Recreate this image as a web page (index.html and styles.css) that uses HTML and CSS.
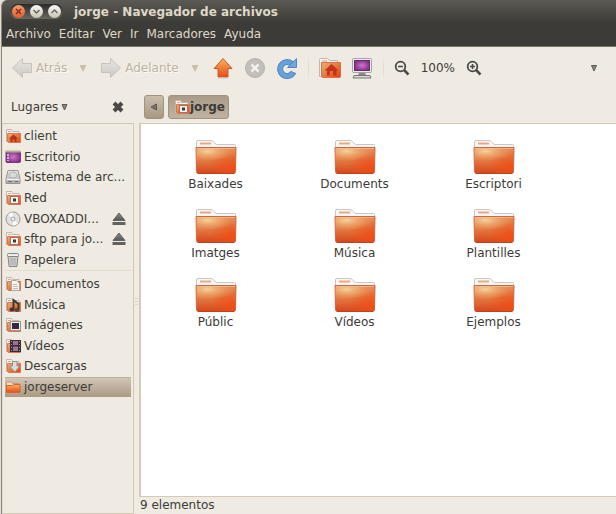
FILE: index.html
```html
<!DOCTYPE html>
<html lang="es">
<head>
    <meta charset="utf-8">
    <title>jorge - Navegador de archivos</title>
    <link rel="stylesheet" href="styles.css">
</head>
<body>
    <svg class="defs" aria-hidden="true">
        <defs>
            <linearGradient id="gOrange" x1="0" y1="0" x2="1" y2="1">
                <stop offset="0" stop-color="#f0b070"/>
                <stop offset="0.5" stop-color="#e07c40"/>
                <stop offset="0.8" stop-color="#ec541d"/>
                <stop offset="1" stop-color="#d8431a"/>
            </linearGradient>
            <radialGradient id="gShine" cx="0.28" cy="0.2" r="0.7">
                <stop offset="0" stop-color="#f8dba6" stop-opacity="0.9"/>
                <stop offset="1" stop-color="#f0a860" stop-opacity="0"/>
            </radialGradient>
            <linearGradient id="gFolder" x1="0" y1="0" x2="0" y2="1">
                <stop offset="0" stop-color="#e58a58"/>
                <stop offset="0.6" stop-color="#e0703a"/>
                <stop offset="1" stop-color="#d8441a"/>
            </linearGradient>
            <radialGradient id="gGlow" cx="0.95" cy="0.75" r="0.6">
                <stop offset="0" stop-color="#f04e16"/>
                <stop offset="1" stop-color="#f04e16" stop-opacity="0"/>
            </radialGradient>
            <linearGradient id="gUp" x1="0" y1="0" x2="0" y2="1">
                <stop offset="0" stop-color="#f4b55f"/>
                <stop offset="1" stop-color="#ea4a17"/>
            </linearGradient>
            <linearGradient id="gGray" x1="0" y1="0" x2="0" y2="1">
                <stop offset="0" stop-color="#eae7e3"/>
                <stop offset="1" stop-color="#cbc6c0"/>
            </linearGradient>
            <radialGradient id="gPurple">
                <stop offset="0" stop-color="#cf78cc"/>
                <stop offset="1" stop-color="#86338b"/>
            </radialGradient>
            <linearGradient id="gMetal" x1="0" y1="0" x2="0" y2="1">
                <stop offset="0" stop-color="#ededed"/>
                <stop offset="1" stop-color="#a9a9a9"/>
            </linearGradient>
            <linearGradient id="gEject" x1="0" y1="0" x2="0" y2="1">
                <stop offset="0" stop-color="#8f8f8d"/>
                <stop offset="1" stop-color="#555553"/>
            </linearGradient>
        </defs>
        <symbol id="folder" viewBox="0 0 42 36">
            <path d="M1.500 10V3q0-1.500 1.500-1.500h13q1.500 0 2.500 1.500l3 2.500h18q1 0 1 1V10z" fill="#f7f7f6" stroke="#c8c7c6"/>
            <path d="M5 4.500h11" stroke="#efa683" stroke-width="2"/>
            <path d="M1 8.500h40l-.5 24q0 2-2 2h-35q-2 0-2-2z" fill="url(#gFolder)"/>
            <path d="M1 8.500h40l-.5 24q0 2-2 2h-35q-2 0-2-2z" fill="url(#gGlow)" stroke="#cd6842"/>
            <path d="M1.500 9h39v9Q22 20 1.500 25z" fill="url(#gShine)"/>
            <path d="M2 9.500h38" stroke="#f4c095" stroke-opacity="0.7"/>
            <path d="M3 34.500h36" stroke="#b84620"/>
        </symbol>
        <symbol id="smallFolder" viewBox="0 0 16 16">
            <path d="M1.500 13.500v-12h5l1 2h6.500v10z" fill="#f8f6f4" stroke="#bab7b3"/>
            <path d="M3 3.500h3" stroke="#f0a07a"/>
            <path d="M2.500 5.500h13v9h-12l-1-1z" fill="url(#gOrange)" stroke="#dd7650"/>
        </symbol>
        <symbol id="server" viewBox="0 0 16 16">
            <use href="#smallFolder"/>
            <rect x="5.500" y="6.500" width="8" height="7" fill="#f4f3f1" stroke="#a8735f"/>
            <path d="M8 8.500h3v3H8z" fill="#3a3936"/>
        </symbol>
    </svg>

    <div class="window">
        <header class="titlebar">
            <div class="controls">
                <button class="control close" aria-label="Cerrar"><svg viewBox="0 0 13 13"><path d="M4 4l5 5M9 4l-5 5" stroke="#7c351b" stroke-width="1.500"/></svg></button>
                <button class="control" aria-label="Minimizar"><svg viewBox="0 0 13 13"><path d="M3.500 5l3 3 3-3" fill="none" stroke="#696760" stroke-width="1.500"/></svg></button>
                <button class="control" aria-label="Maximizar"><svg viewBox="0 0 13 13"><path d="M3.500 8l3-3 3 3" fill="none" stroke="#696760" stroke-width="1.500"/></svg></button>
            </div>
            <h1>jorge - Navegador de archivos</h1>
        </header>

        <nav class="menubar">
            <button>Archivo</button>
            <button>Editar</button>
            <button>Ver</button>
            <button>Ir</button>
            <button>Marcadores</button>
            <button>Ayuda</button>
        </nav>

        <div class="toolbar">
            <button class="tool history" disabled>
                <svg width="22" height="22" viewBox="0 0 22 22"><path d="M1.500 11L11.500 1.500v5h9v9h-9v5z" fill="url(#gGray)" stroke="#c8c3bd"/></svg>
                Atrás
            </button>
            <button class="tool drop" disabled aria-label="Historial atrás"><svg width="8" height="8" viewBox="0 0 8 8"><path d="M0.500 1h7l-3.500 7z" fill="#c9bea8"/></svg></button>
            <button class="tool history" disabled>
                <svg width="22" height="22" viewBox="0 0 22 22"><path d="M20.500 11L10.500 1.500v5h-9v9h9v5z" fill="url(#gGray)" stroke="#c8c3bd"/></svg>
                Adelante
            </button>
            <button class="tool drop" disabled aria-label="Historial adelante"><svg width="8" height="8" viewBox="0 0 8 8"><path d="M0.500 1h7l-3.500 7z" fill="#c9bea8"/></svg></button>
            <button class="tool" aria-label="Subir">
                <svg width="22" height="22" viewBox="0 0 22 22"><path d="M11 1.500L20 11.500h-4v8.500h-10v-8.500h-4z" fill="url(#gUp)" stroke="#ca5a2c"/><path d="M6 21h10" stroke="#c9c3ba"/></svg>
            </button>
            <button class="tool" aria-label="Detener" disabled>
                <svg width="22" height="22" viewBox="0 0 22 22"><circle cx="11" cy="11" r="9.500" fill="#c3beb9" stroke="#b5b0aa"/><path d="M7.500 7.500l7 7M14.500 7.500l-7 7" stroke="#f3f1ee" stroke-width="2.500"/></svg>
            </button>
            <button class="tool" aria-label="Recargar">
                <svg width="22" height="22" viewBox="0 0 22 22"><path d="M17.500 15A7 7 0 1 1 15.500 6.500" fill="none" stroke="#5088c8" stroke-width="6"/><path d="M11.500 10.500h9V1.500z" fill="#75a6da" stroke="#5088c8"/><path d="M17 16A7 7 0 1 1 15 6" fill="none" stroke="#6b9fd8" stroke-width="4"/></svg>
            </button>
            <span class="sep"></span>
            <button class="tool" aria-label="Carpeta personal">
                <svg width="22" height="22" viewBox="0 0 22 22"><path d="M0.500 19.500v-17q0-1 1-1h7l2 2h8v16z" fill="#f5f3f1" stroke="#bcb8b4"/><path d="M3 4h5" stroke="#ee9b75"/><path d="M2.500 5.500h19v14q0 1-1 1h-17l-1-1z" fill="url(#gOrange)" stroke="#de6f45"/><path d="M5.500 13.500L12.500 7l7 6.500h-2v5h-3.500V14h-3v4.500H8v-5z" fill="#c3331d"/></svg>
            </button>
            <button class="tool" aria-label="Equipo">
                <svg width="22" height="22" viewBox="0 0 22 22"><rect x="1.500" y="1.500" width="19" height="14" rx="1" fill="#ebeaea" stroke="#a5a3a3"/><rect x="3.500" y="3.500" width="15" height="10" fill="url(#gPurple)" stroke="#6b2a70"/><path d="M8 16h6l1 2H7z" fill="#888"/><path d="M3 18.500h16l1 2.500H2z" fill="#d9d9d9" stroke="#777"/></svg>
            </button>
            <span class="sep"></span>
            <button class="tool" aria-label="Reducir">
                <svg width="16" height="16" viewBox="0 0 16 16"><circle cx="6.500" cy="6.500" r="4.800" fill="none" stroke="#4b4946" stroke-width="1.800"/><path d="M4 6.500h5" stroke="#4b4946" stroke-width="1.500"/><path d="M10 10l4.500 4.500" stroke="#4b4946" stroke-width="2.500"/></svg>
            </button>
            <span class="zoom-level">100%</span>
            <button class="tool" aria-label="Ampliar">
                <svg width="16" height="16" viewBox="0 0 16 16"><circle cx="6.500" cy="6.500" r="4.800" fill="none" stroke="#4b4946" stroke-width="1.800"/><path d="M4 6.500h5M6.500 4v5" stroke="#4b4946" stroke-width="1.500"/><path d="M10 10l4.500 4.500" stroke="#4b4946" stroke-width="2.500"/></svg>
            </button>
            <button class="tool more" aria-label="Más opciones"><svg width="8" height="8" viewBox="0 0 8 8"><path d="M1.500 1.500h5L4 7z" fill="#8b8882" stroke="#5c5a56"/></svg></button>
        </div>

        <div class="content">
            <aside class="side">
                <div class="side-head">
                    <button class="places">Lugares <svg width="7" height="8" viewBox="0 0 7 8"><path d="M1 1.500h5L3.500 7z" fill="#8b8882" stroke="#5c5a56"/></svg></button>
                    <button class="side-close" aria-label="Cerrar panel"><svg width="12" height="12" viewBox="0 0 12 12"><path d="M2 2l8 8M10 2l-8 8" stroke="#4c4a47" stroke-width="4"/></svg></button>
                </div>
                <div class="places-list">
                    <ul>
                        <li><a href="#"><svg class="icon" viewBox="0 0 16 16"><use href="#smallFolder"/><path d="M4 10.500L8.500 6.500l4.500 4h-1.500V14h-2v-2.500h-2V14h-2v-3.500z" fill="#b92f18"/></svg>client</a></li>
                        <li><a href="#"><svg class="icon" viewBox="0 0 16 16"><rect x="1" y="2.500" width="14.500" height="11" rx="1" fill="url(#gPurple)" stroke="#76377b"/><path d="M0.500 2.500h15" stroke="#b5ad91" stroke-width="2"/><path d="M3 5v7" stroke="#e9d7ea" stroke-width="1.500" stroke-dasharray="2 1"/></svg>Escritorio</a></li>
                        <li><a href="#"><svg class="icon" viewBox="0 0 16 16"><path d="M3 1.500h10l2 8v5H1v-5z" fill="url(#gMetal)" stroke="#969593"/><ellipse cx="8" cy="6" rx="4" ry="3" fill="#dadada" stroke="#b1b1b1"/><path d="M1.500 10.500h13" stroke="#f6f6f6"/><path d="M3 12.500h4M10 12.500h3" stroke="#70706f"/></svg>Sistema de arc...</a></li>
                        <li><a href="#"><svg class="icon"><use href="#server"/></svg>Red</a></li>
                        <li><a href="#"><svg class="icon" viewBox="0 0 16 16"><circle cx="8" cy="8" r="7" fill="#e1e1e0" stroke="#989795"/><path d="M8 8L3 3.500Q6 1 8 1.500zM8 8l5 4.500q-3 2.500-5 2z" fill="#fafafa"/><circle cx="8" cy="8" r="2" fill="#f4f2ef" stroke="#a3a19e"/></svg>VBOXADDI...</a><button aria-label="Expulsar"><svg width="14" height="14" viewBox="0 0 14 14"><path d="M7 1l6 7.500H1z" fill="url(#gEject)" stroke="#62625f"/><path d="M0.500 11.500h13" stroke="#62625f" stroke-width="3"/></svg></button></li>
                        <li><a href="#"><svg class="icon"><use href="#server"/></svg>sftp para jo...</a><button aria-label="Expulsar"><svg width="14" height="14" viewBox="0 0 14 14"><path d="M7 1l6 7.500H1z" fill="url(#gEject)" stroke="#62625f"/><path d="M0.500 11.500h13" stroke="#62625f" stroke-width="3"/></svg></button></li>
                        <li><a href="#"><svg class="icon" viewBox="0 0 16 16"><path d="M3 4h10l-1 10.500H4z" fill="#d0cecb" stroke="#898783"/><rect x="2.500" y="1.500" width="11" height="3" rx="1" fill="#eee" stroke="#858380"/><path d="M6 6v7M8 6v7M10 6v7" stroke="#a9a7a4"/></svg>Papelera</a></li>
                    </ul>
                    <ul class="bookmarks">
                        <li><a href="#"><svg class="icon" viewBox="0 0 16 16"><use href="#smallFolder"/><path d="M6.500 4.500h5l3 3v7h-8z" fill="#f5f4f3" stroke="#aaa7a3"/><path d="M8 8.500h4M8 10.500h5M8 12.500h5" stroke="#bdbbb8"/></svg>Documentos</a></li>
                        <li><a href="#"><svg class="icon" viewBox="0 0 16 16"><use href="#smallFolder"/><path d="M8.500 12V3l5 4v5" fill="none" stroke="#3b3937" stroke-width="2"/><ellipse cx="7" cy="12.500" rx="2.500" ry="2" fill="#3b3937"/><ellipse cx="12" cy="13" rx="2.500" ry="2" fill="#4b4947"/></svg>Música</a></li>
                        <li><a href="#"><svg class="icon" viewBox="0 0 16 16"><use href="#smallFolder"/><rect x="5.500" y="4.500" width="10" height="9" fill="#efedeb" stroke="#989590"/><path d="M7 6h7v6H7z" fill="#35283f"/></svg>Imágenes</a></li>
                        <li><a href="#"><svg class="icon" viewBox="0 0 16 16"><use href="#smallFolder"/><path d="M5 2h11v12H5z" fill="#392b32"/><path d="M8 3h5v4H8zM8 8.500h5V13H8z" fill="#9c7197"/><path d="M6.500 3v11M14.500 3v11" stroke="#a898a2" stroke-dasharray="1 2"/></svg>Vídeos</a></li>
                        <li><a href="#"><svg class="icon" viewBox="0 0 16 16"><use href="#smallFolder"/><path d="M7.500 3.500h4.500V8h3l-5.200 6L4.500 8h3z" fill="#dddcdb" stroke="#92908d"/></svg>Descargas</a></li>
                        <li class="selected"><a href="#"><svg class="icon" viewBox="0 0 16 16"><path d="M1.500 13V4q0-1 1-1h4l1 1.500h6.500V13z" fill="#f5ddc9" stroke="#d1916f"/><path d="M1.500 13.500v-7h6l1-1h6.500v8z" fill="url(#gUp)" stroke="#d7652f"/></svg>jorgeserver</a></li>
                    </ul>
                </div>
            </aside>

            <div class="splitter"></div>

            <main class="main">
                <div class="path">
                    <button class="path-button" aria-label="Anterior"><svg width="8" height="8" viewBox="0 0 8 8"><path d="M6.500 1v6L1 4z" fill="#77736b" stroke="#5c5850"/></svg></button>
                    <button class="path-button current"><svg width="16" height="16"><use href="#server"/></svg>jorge</button>
                </div>
                <div class="files">
                    <a href="#" class="file"><svg><use href="#folder"/></svg>Baixades</a>
                    <a href="#" class="file"><svg><use href="#folder"/></svg>Documents</a>
                    <a href="#" class="file"><svg><use href="#folder"/></svg>Escriptori</a>
                    <a href="#" class="file"><svg><use href="#folder"/></svg>Imatges</a>
                    <a href="#" class="file"><svg><use href="#folder"/></svg>Música</a>
                    <a href="#" class="file"><svg><use href="#folder"/></svg>Plantilles</a>
                    <a href="#" class="file"><svg><use href="#folder"/></svg>Públic</a>
                    <a href="#" class="file"><svg><use href="#folder"/></svg>Vídeos</a>
                    <a href="#" class="file"><svg><use href="#folder"/></svg>Ejemplos</a>
                </div>
                <footer class="status">9 elementos</footer>
            </main>
        </div>
    </div>
</body>
</html>
```
FILE: styles.css
```css
* {
    box-sizing: border-box;
}

body {
    margin: 0;
    background-color: #e4e0d9;
    color: #3c3b37;
    font: 12px/16px "DejaVu Sans", sans-serif;
}

button {
    display: flex;
    align-items: center;
    padding: 0;
    border: none;
    background: none;
    color: inherit;
    font: inherit;
}

a {
    color: inherit;
    text-decoration: none;
}

ul {
    margin: 0;
    padding: 0;
    list-style: none;
}

svg {
    display: block;
    flex: none;
}

.defs {
    position: absolute;
    width: 0;
    height: 0;
}

.window {
    display: flex;
    flex-direction: column;
    min-height: 100vh;
    margin-left: 1px;
    border-left: 1px solid #8e8779;
    border-radius: 6px 0 0 0;
    background-color: #efebe3;
    overflow: hidden;
}

/* title bar */
.titlebar {
    display: flex;
    align-items: center;
    gap: 11px;
    height: 23px;
    padding: 0 8px;
    background: linear-gradient(#5a5953, #42413c 80%, #3c3b37);
    color: #dfd8c8;
}

.titlebar h1 {
    margin: 0;
    font-size: 12px;
    line-height: 16px;
}

.controls {
    display: flex;
    gap: 5px;
    padding: 1px 2px;
    border-radius: 9px;
    background: linear-gradient(#2c2b28, #696861);
}

.control {
    width: 13px;
    height: 13px;
    border-radius: 50%;
    background: linear-gradient(#fbfaf7, #c9c3b6);
}

.control.close {
    background: linear-gradient(#f59a72, #e2602c);
}

/* menu bar */
.menubar {
    display: flex;
    gap: 8px;
    height: 24px;
    padding: 0 4px 2px;
    border-bottom: 1px solid #77746c;
    background-color: #3c3b37;
    color: #dfd8c8;
}

/* toolbar */
.toolbar {
    display: flex;
    align-items: center;
    gap: 10px;
    height: 43px;
    padding: 0 18px 2px 9px;
}

.history {
    gap: 3px;
}

.tool:disabled {
    color: #bdb39f;
    text-shadow: 1px 1px #fbf9f5;
}

.drop {
    margin: 0 3px 0 2px;
}

.sep {
    width: 1px;
    height: 24px;
    background: linear-gradient(#efebe3, #dfd9c9, #efebe3);
}

.zoom-level {
    margin: 0 1px;
}

.more {
    margin-left: auto;
}

/* content */
.content {
    display: flex;
    flex: 1;
}

.side {
    display: flex;
    flex-direction: column;
    width: 132px;
}

.side-head {
    display: flex;
    align-items: center;
    justify-content: space-between;
    height: 33px;
    padding: 0 10px 0 9px;
}

.places {
    gap: 3px;
}

.places-list {
    flex: 1;
    padding: 2px 2px 0;
    border: 1px solid #d3c8b4;
    border-left-color: #e2dccf;
}

.places-list ul {
    display: grid;
    grid-template-columns: minmax(0, 1fr);
    grid-auto-rows: 1fr;
    height: 144px;
}

.places-list .bookmarks {
    height: 127px;
    padding-top: 3px;
    border-top: 1px solid #e3ddcf;
}

.places-list li {
    display: flex;
    align-items: center;
    justify-content: space-between;
    padding-right: 5px;
}

.places-list a {
    display: flex;
    align-items: center;
    gap: 3px;
    white-space: nowrap;
}

.places-list .selected {
    border-top: 1px solid #bdb09b;
    background: linear-gradient(#d0c5b6, #ab9a84);
}

.icon {
    width: 16px;
    height: 16px;
}

.splitter {
    width: 5px;
    padding-top: 208px;
}

.splitter::before {
    content: "";
    display: block;
    height: 9px;
    margin: 0 1px;
    background: repeating-linear-gradient(#dcd5c8 0 1px, transparent 1px 3px);
}

/* folder view */
.main {
    display: flex;
    flex: 1;
    flex-direction: column;
    min-width: 0;
}

.path {
    display: flex;
    align-items: center;
    gap: 4px;
    height: 33px;
    padding-left: 5px;
}

.path-button {
    justify-content: center;
    width: 20px;
    height: 24px;
    border: 1px solid #a2937d;
    border-radius: 3px;
    background: linear-gradient(#c9bdad, #a89880);
}

.path-button.current {
    width: auto;
    padding: 0 3px 0 5px;
    background: linear-gradient(#aa9c88, #bfb2a0);
    font-weight: bold;
}

.files {
    display: grid;
    flex: 1;
    grid-template-columns: repeat(auto-fill, 139px);
    grid-auto-rows: 69px;
    padding: 15px 0 0 5px;
    border: solid #d5cab8;
    border-width: 1px 0 1px 2px;
    background-color: #fff;
}

.file {
    display: flex;
    flex-direction: column;
    align-items: center;
    gap: 1px;
}

.file svg {
    width: 42px;
    height: 36px;
}

.status {
    height: 17px;
    padding-left: 1px;
}
```
